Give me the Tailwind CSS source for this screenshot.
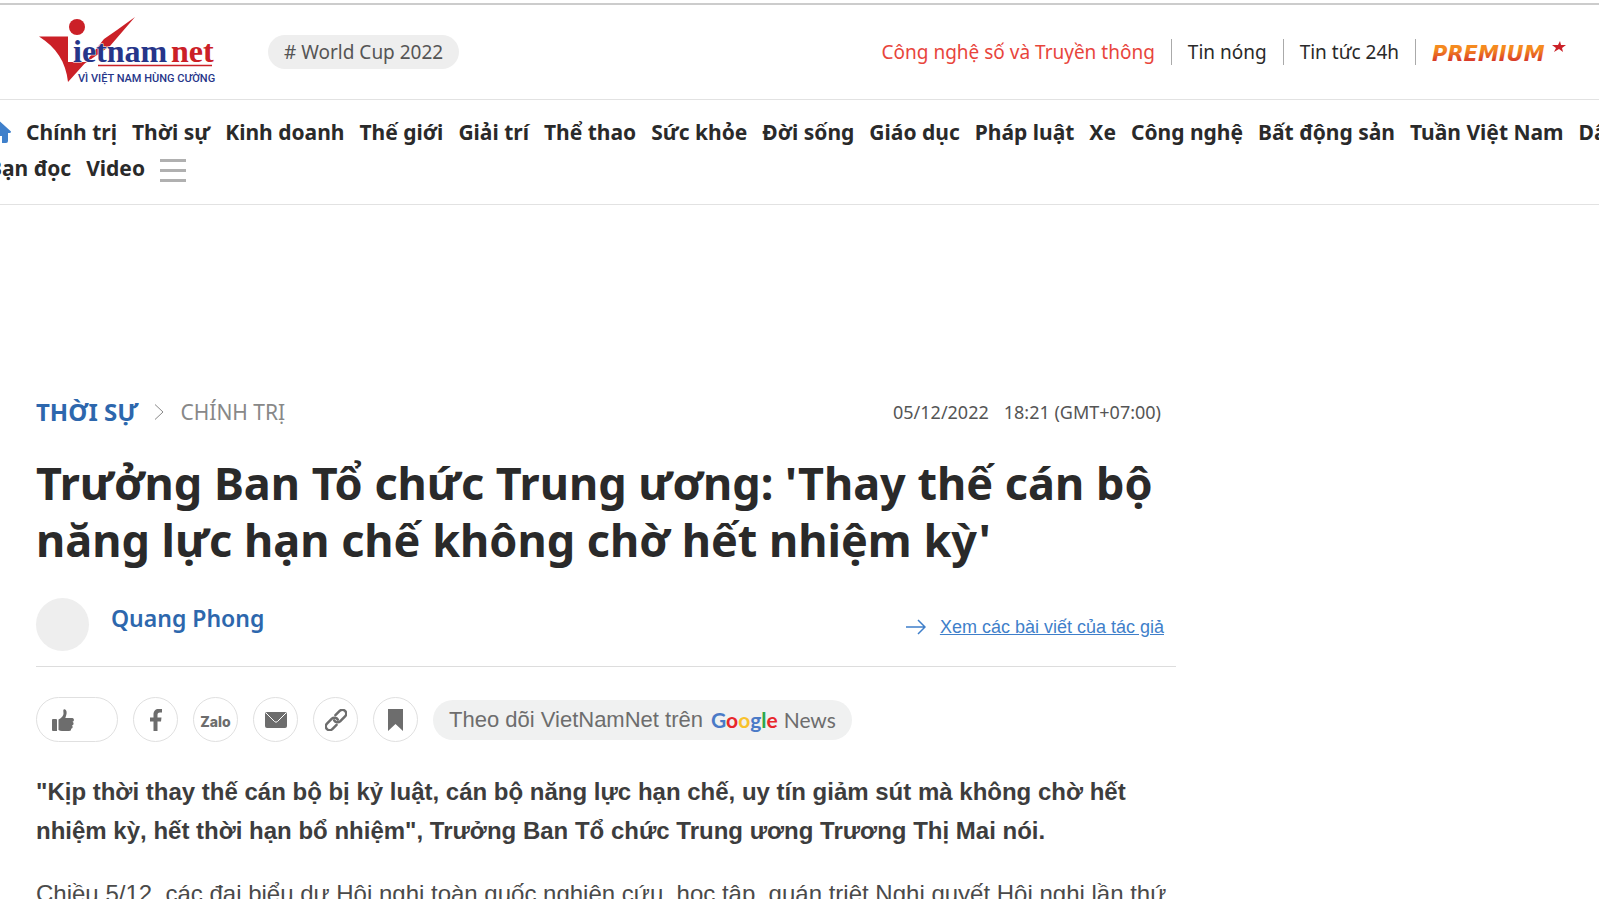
<!DOCTYPE html>
<html lang="vi">
<head>
  <meta charset="UTF-8" />
  <meta name="viewport" content="width=device-width, initial-scale=1" />
  <title>Trưởng Ban Tổ chức Trung ương - VietNamNet</title>
  <script src="https://cdn.jsdelivr.net/npm/@tailwindcss/browser@4"></script>
</head>
<body class="h-screen overflow-hidden bg-white font-['Noto_Sans',sans-serif] text-[#2a2a2a]">

  <!-- Top bar -->
  <header class="mt-[3px] flex h-[97px] items-center border-t-2 border-b border-t-[#ccc] border-b-[#e2e2e2] pr-[33px] pl-[38px]">
    <a href="#" aria-label="VietNamNet">
      <svg class="h-[70px] w-[178px]" viewBox="0 0 178 70">
        <path d="M1 19.500H30V45H48L30 65C28 45 18 30 1 19.500Z" fill="#cb2027" />
        <circle cx="39" cy="10" r="8" fill="#cb2027" />
        <path d="M97 0L72 29L46 47L66 22L79 13Z" fill="#cb2027" />
        <g font-family="Liberation Serif, serif" font-weight="700" font-size="32" stroke="#fff" paint-order="stroke">
          <text x="35" y="45" fill="#263589">ietnam</text>
          <text x="133" y="45" fill="#cb2027">net</text>
        </g>
        <path d="M60 48.500H174" stroke="#cb2027" stroke-width="1.500" />
        <text x="40" y="65" font-family="Roboto, sans-serif" font-weight="500" font-size="11" fill="#263589">VÌ VIỆT NAM HÙNG CƯỜNG</text>
      </svg>
    </a>
    <a href="#" class="ml-[52px] rounded-full bg-[#eee] px-4 py-[3px] text-[19px] leading-7 text-[#555]"># World Cup 2022</a>

    <nav class="ml-auto flex items-center text-[19px] leading-[26px]">
      <a href="#" class="pr-4 text-[#e8453c]">Công nghệ số và Truyền thông</a>
      <a href="#" class="border-l border-[#aaa] px-4">Tin nóng</a>
      <a href="#" class="border-l border-[#aaa] px-4">Tin tức 24h</a>
      <a href="#" class="border-l border-[#aaa] pl-4" aria-label="Premium">
        <svg class="h-[26px] w-[134px]" viewBox="0 0 134 26">
          <defs>
            <linearGradient id="premium" x1="0" y1="0" x2="0" y2="1">
              <stop offset="0.3" stop-color="#f58a1f" />
              <stop offset="0.8" stop-color="#d7382a" />
            </linearGradient>
          </defs>
          <text x="0" y="22" font-family="DejaVu Sans, sans-serif" font-weight="700" font-style="italic" font-size="21" fill="url(#premium)">PREMIUM</text>
          <path d="M128 2L129 6L134 6L130 9L131 13L127 10L122 13L124 9L120 6L126 6Z" fill="#cb2027" />
        </svg>
      </a>
    </nav>
  </header>

  <!-- Main menu -->
  <nav class="-ml-3 border-b border-[#e2e2e2] pt-3.5 pb-[18px] text-[21px] leading-9 font-bold whitespace-nowrap">
    <div class="flex items-center gap-[15px]">
      <a href="#" class="shrink-0" aria-label="Trang chủ">
        <svg class="h-[22px] w-[23px]" viewBox="0 0 23 22" fill="#3f80cb">
          <path d="M11.500 0L23 10.500Q23 12 21.500 12H20V20Q20 22 18 22H14V15H9V22H5Q3 22 3 20V12H1.500Q0 12 0 10.500Z" />
        </svg>
      </a>
      <a href="#">Chính trị</a>
      <a href="#">Thời sự</a>
      <a href="#">Kinh doanh</a>
      <a href="#">Thế giới</a>
      <a href="#">Giải trí</a>
      <a href="#">Thể thao</a>
      <a href="#">Sức khỏe</a>
      <a href="#">Đời sống</a>
      <a href="#">Giáo dục</a>
      <a href="#">Pháp luật</a>
      <a href="#">Xe</a>
      <a href="#">Công nghệ</a>
      <a href="#">Bất động sản</a>
      <a href="#">Tuần Việt Nam</a>
      <a href="#">Dân tộc</a>
    </div>
    <div class="flex items-center gap-[15px]">
      <a href="#">Bạn đọc</a>
      <a href="#">Video</a>
      <button type="button" class="pt-1" aria-label="Menu">
        <svg class="h-[23px] w-[26px]" viewBox="0 0 26 23" stroke="#b0b0b0" stroke-width="3">
          <path d="M0 1.500H26M0 11.500H26M0 21.500H26" />
        </svg>
      </button>
    </div>
  </nav>

  <!-- Article -->
  <main class="ml-9 max-w-[1140px] pt-[191px]">
    <div class="flex items-center justify-between pr-[15px] leading-8">
      <div class="flex items-center">
        <a href="#" class="text-2xl leading-8 font-bold text-[#2d67ad]">THỜI SỰ</a>
        <svg class="mx-4 h-4 w-2.5" viewBox="0 0 10 16" fill="none" stroke="#888">
          <path d="M1 0.500L9 8L1 15.500" />
        </svg>
        <a href="#" class="text-[21px] text-[#888]">CHÍNH TRỊ</a>
      </div>
      <div class="flex gap-[15px] text-lg text-[#555]">
        <span>05/12/2022</span>
        <span>18:21 (GMT+07:00)</span>
      </div>
    </div>

    <h1 class="mt-[26px] text-[45px] leading-[57px] font-bold">Trưởng Ban Tổ chức Trung ương: 'Thay thế cán bộ năng lực hạn chế không chờ hết nhiệm kỳ'</h1>

    <div class="mt-[30px] flex border-b border-[#ddd] pr-3 pb-[15px]">
      <span class="size-[53px] rounded-full bg-[#eee]"></span>
      <a href="#" class="mt-1 ml-[22px] text-[23px] leading-8 font-semibold text-[#2d67ad]">Quang Phong</a>
      <a href="#" class="ml-auto flex items-center gap-3.5 pt-1 font-['Liberation_Sans',sans-serif] text-lg text-[#3f7fca]">
        <svg class="h-4 w-5" viewBox="0 0 20 16" fill="none" stroke="currentColor" stroke-width="1.500">
          <path d="M0 8H19M12 1L19 8L12 15" />
        </svg>
        <span class="underline">Xem các bài viết của tác giả</span>
      </a>
    </div>

    <!-- Share buttons -->
    <div class="mt-[30px] flex items-center gap-[15px] text-[#6d6d6d]">
      <button type="button" aria-label="Thích" class="flex h-[45px] w-[82px] items-center rounded-full border border-[#e0e0e0] pl-[15px]">
        <svg class="h-[22px] w-[22px]" viewBox="0 0 22 22" fill="currentColor">
          <path d="M0 11Q0 10 1 10H4Q5 10 5 11V22H1Q0 22 0 21ZM6.500 10.500C9 9.500 11.500 7 11.500 4.500L11.300 1.500C11.500 0 13 0 14 1.200C15.300 3 14.500 6 13.300 9H20.500Q22 9.500 22 11Q21.800 12.500 20.500 12.800Q22 13.500 21.500 15.200Q21.200 16.300 20 16.500Q21 17.500 20.500 18.800Q20 19.800 19 19.800Q19.500 22 17 22H10Q8 22 6.500 21Z" />
        </svg>
      </button>
      <button type="button" aria-label="Facebook" class="flex size-[45px] items-center justify-center rounded-full border border-[#e0e0e0]">
        <svg class="h-[22px] w-3" viewBox="0 0 12 22" fill="currentColor">
          <path d="M3.500 22V12.500H0V8.500H3.500V5.500C3.500 2 5.500 0 8.500 0H12V3.500H10C8 3.500 7.500 4.500 7.500 6V8.500H11.500L11 12.500H7.500V22Z" />
        </svg>
      </button>
      <button type="button" class="flex size-[45px] items-center justify-center rounded-full border border-[#e0e0e0] pt-1 font-[Inter,sans-serif] text-sm font-extrabold">Zalo</button>
      <button type="button" aria-label="Email" class="flex size-[45px] items-center justify-center rounded-full border border-[#e0e0e0]">
        <svg class="h-4 w-[22px]" viewBox="0 0 22 16">
          <rect width="22" height="16" rx="2" fill="currentColor" />
          <path d="M1 1L9.500 9.500Q11 11 12.500 9.500L21 1" fill="none" stroke="#fff" />
        </svg>
      </button>
      <button type="button" aria-label="Sao chép liên kết" class="flex size-[45px] items-center justify-center rounded-full border border-[#e0e0e0]">
        <svg class="size-[22px]" viewBox="0 0 22 22" fill="none" stroke="currentColor" stroke-width="2.500" stroke-linecap="round">
          <g transform="rotate(-45 11 11)">
            <path d="M8 14.800H2A3.800 3.800 0 0 1 2 7.200H9A3.800 3.800 0 0 1 12.600 12" />
            <path d="M14 7.200H20A3.800 3.800 0 0 1 20 14.800H13A3.800 3.800 0 0 1 9.400 10" />
          </g>
        </svg>
      </button>
      <button type="button" aria-label="Lưu bài" class="flex size-[45px] items-center justify-center rounded-full border border-[#e0e0e0]">
        <svg class="h-[22px] w-[15px]" viewBox="0 0 15 22" fill="currentColor">
          <path d="M0 0H15V22L7.500 15L0 22Z" />
        </svg>
      </button>
      <a href="#" class="flex h-10 items-center rounded-full bg-[#f0f1f1] px-4 font-['Liberation_Sans',sans-serif] text-[22px]">
        <span>Theo dõi VietNamNet trên</span>
        <span class="ml-2 font-[Lato,sans-serif] text-[21px] font-bold"><span class="text-[#4a7ac7]">G</span><span class="text-[#e8272c]">o</span><span class="text-[#f8c22c]">o</span><span class="text-[#4a7ac7]">g</span><span class="text-[#2ba84a]">l</span><span class="text-[#e8272c]">e</span></span>
        <span class="ml-1.5 font-[Lato,sans-serif] text-[21px]">News</span>
      </a>
    </div>

    <div class="font-['Liberation_Sans',sans-serif] text-2xl leading-[39px] text-[#3d3d3d]">
      <h2 class="mt-[30px] font-bold">"Kịp thời thay thế cán bộ bị kỷ luật, cán bộ năng lực hạn chế, uy tín giảm sút mà không chờ hết nhiệm kỳ, hết thời hạn bổ nhiệm", Trưởng Ban Tổ chức Trung ương Trương Thị Mai nói.</h2>
      <p class="mt-6 text-[#4a4a4a]">Chiều 5/12, các đại biểu dự Hội nghị toàn quốc nghiên cứu, học tập, quán triệt Nghị quyết Hội nghị lần thứ</p>
    </div>
  </main>

</body>
</html>
